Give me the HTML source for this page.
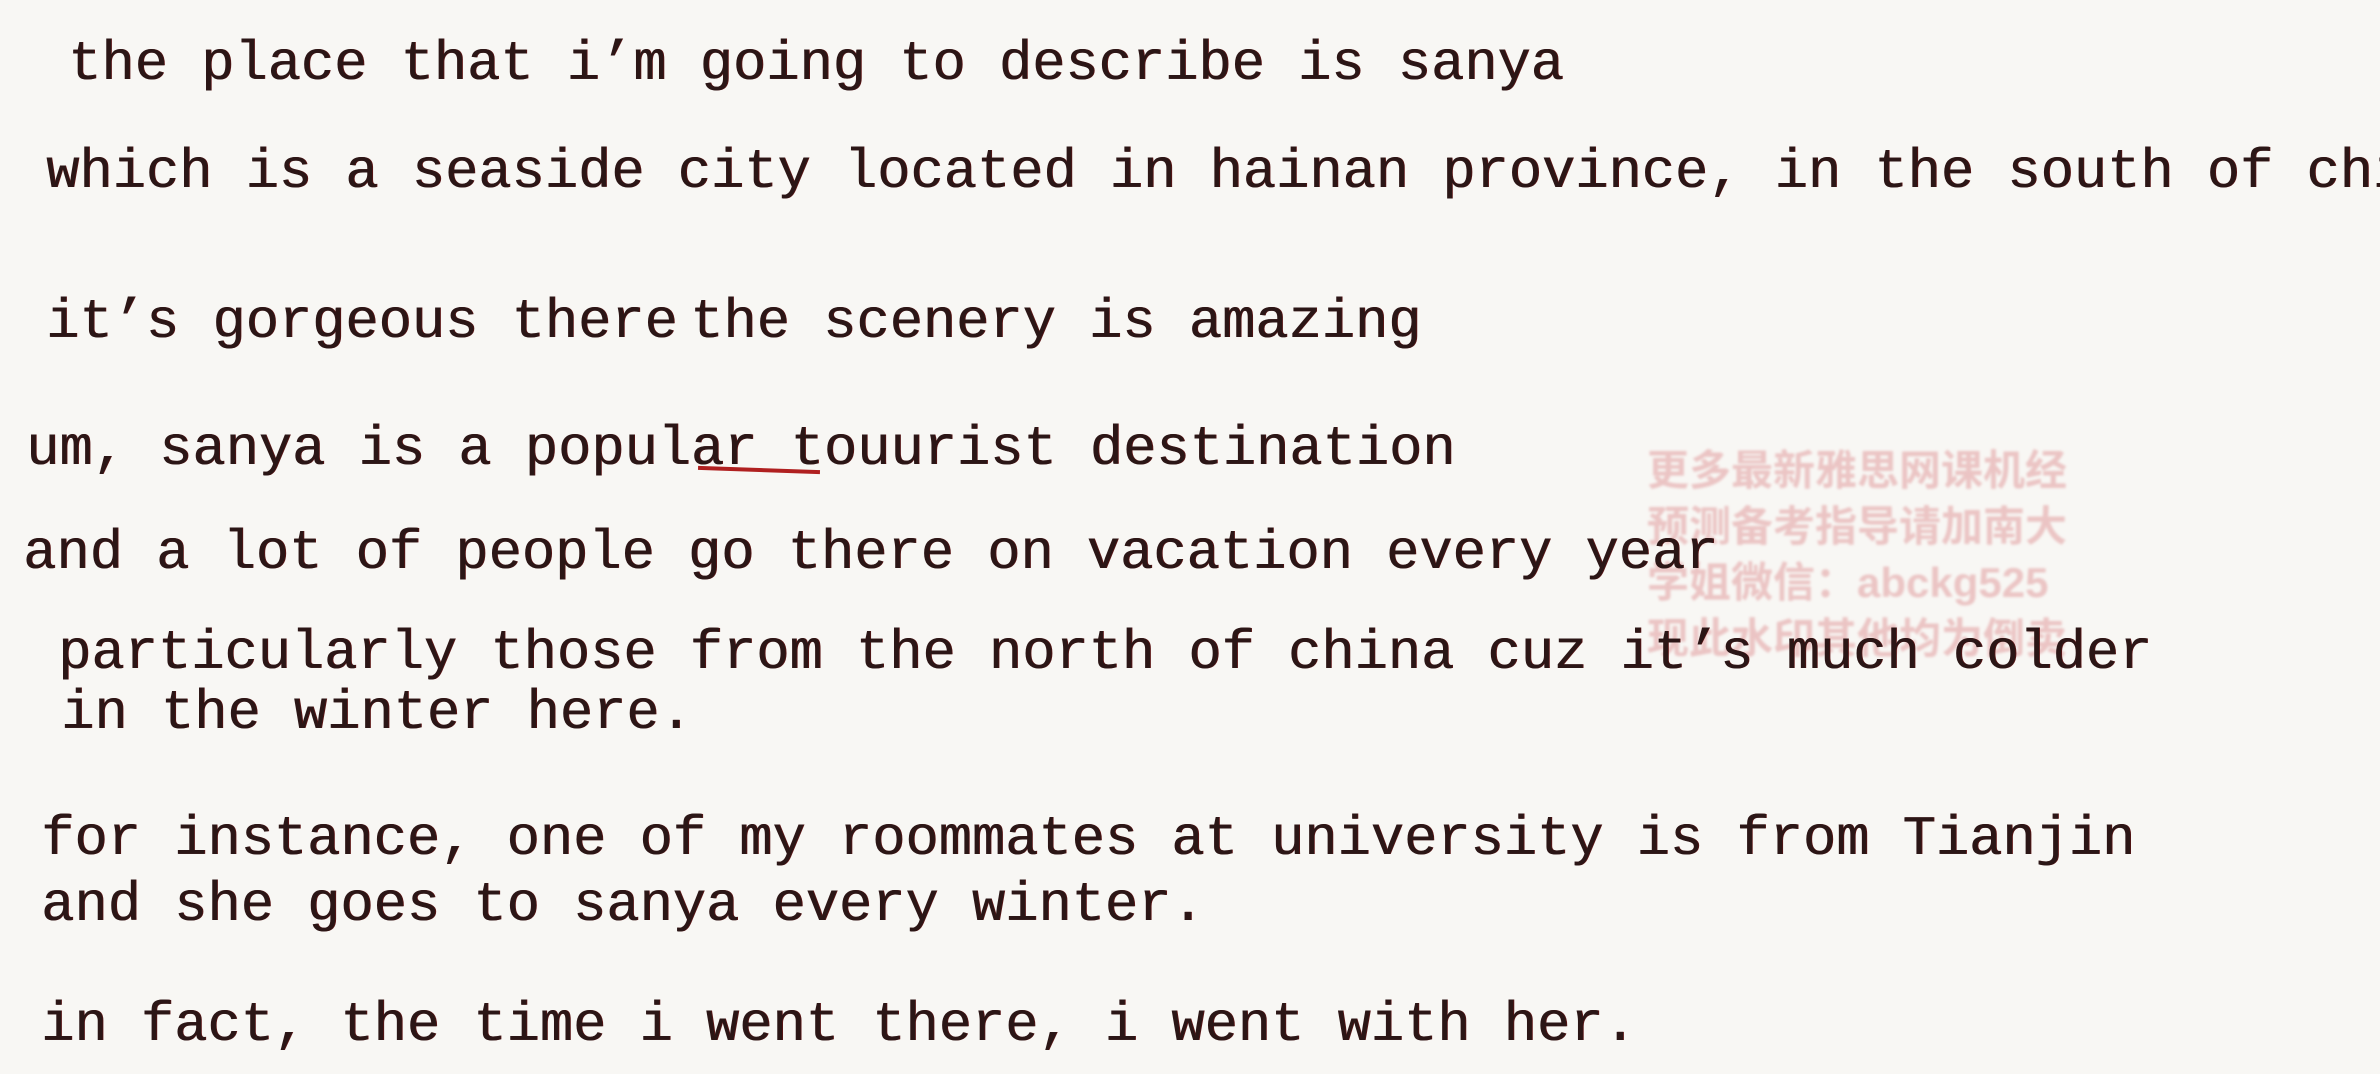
<!DOCTYPE html>
<html><head><meta charset="utf-8"><style>
html,body{margin:0;padding:0}
body{width:2380px;height:1074px;background:#f8f7f4;position:relative;overflow:hidden}
.t{position:absolute;font-family:"Liberation Mono",monospace;font-size:55.4px;line-height:55px;color:#2b1616;white-space:pre;text-shadow:0.8px 0 0 #5a1515}
.wm{position:absolute;left:1647px;top:443px;width:600px;white-space:nowrap;font-family:"Liberation Sans","Noto Sans CJK SC",sans-serif;font-weight:bold;font-size:42px;line-height:56px;color:#e9bcbc;opacity:.85;filter:blur(1.2px)}
</style></head><body>
<div class="wm">更多最新雅思网课机经<br>预测备考指导请加南大<br>学姐微信：abckg525<br>现此水印其他均为倒卖</div>
<div class="t" style="left:68px;top:37px">the place that i’m going to describe is sanya</div>
<div class="t" style="left:46px;top:145px">which is a seaside city located in hainan province, in the south of china</div>
<div class="t" style="left:46px;top:295px">it’s gorgeous there</div>
<div class="t" style="left:690px;top:295px">the scenery is amazing</div>
<div class="t" style="left:26px;top:422px">um, sanya is a popular touurist destination</div>
<div style="position:absolute;left:698px;top:468px;width:122px;height:4px;background:#b02020;transform:rotate(2deg)"></div>
<div class="t" style="left:23px;top:526px">and a lot of people go there on vacation every year</div>
<div class="t" style="left:58px;top:626px">particularly those from the north of china cuz it’s much colder</div>
<div class="t" style="left:61px;top:686px">in the winter here.</div>
<div class="t" style="left:41px;top:812px">for instance, one of my roommates at university is from Tianjin</div>
<div class="t" style="left:41px;top:878px">and she goes to sanya every winter.</div>
<div class="t" style="left:41px;top:998px">in fact, the time i went there, i went with her.</div>
</body></html>
